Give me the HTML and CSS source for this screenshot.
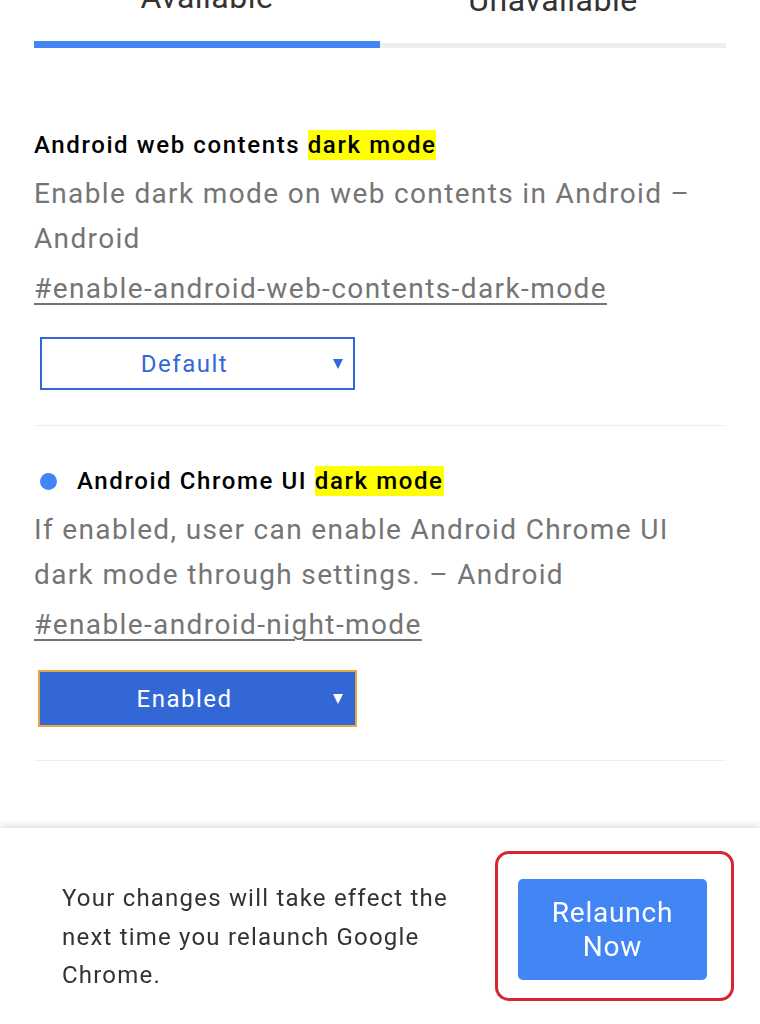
FILE: index.html
```html
<!DOCTYPE html>
<html lang="en">
<head>
<meta charset="utf-8">
<title>Flags</title>
<link rel="stylesheet" href="styles.css">
</head>
<body>
<div class="page">
  <div class="tabs">
    <div class="tab active">
      <div class="tab-label">Available</div>
      <div class="tab-bar"></div>
    </div>
    <div class="tab">
      <div class="tab-label unavail">Unavailable</div>
      <div class="tab-bar"></div>
    </div>
  </div>

  <div class="experiment first">
    <div class="title-row">
      <h2 class="title">Android web contents <mark>dark mode</mark></h2>
    </div>
    <p class="desc">Enable dark mode on web contents in Android – Android</p>
    <a class="permalink" href="#enable-android-web-contents-dark-mode">#enable-android-web-contents-dark-mode</a>
    <div class="select">
      <span class="select-text">Default</span>
      <span class="select-arrow"></span>
    </div>
  </div>

  <div class="experiment">
    <div class="title-row">
      <span class="dot"></span>
      <h2 class="title">Android Chrome UI <mark>dark mode</mark></h2>
    </div>
    <p class="desc">If enabled, user can enable Android Chrome UI dark mode through settings. – Android</p>
    <a class="permalink" href="#enable-android-night-mode">#enable-android-night-mode</a>
    <div class="select enabled">
      <span class="select-text">Enabled</span>
      <span class="select-arrow"></span>
    </div>
  </div>
</div>

<div class="relaunch-bar">
  <p class="relaunch-text">Your changes will take effect the next time you relaunch Google Chrome.</p>
  <div class="highlight-box">
    <button class="relaunch-btn">Relaunch<br>Now</button>
  </div>
</div>
</body>
</html>
```

FILE: styles.css
```css
html, body {
  margin: 0;
  padding: 0;
  background: #ffffff;
  font-family: Roboto, "Noto Sans", "Liberation Sans", sans-serif;
  overflow: hidden;
  height: 1024px;
}

.page {
  padding: 0 34px;
}

.tabs {
  display: flex;
}

.tab {
  flex: 1;
  display: flex;
  flex-direction: column;
}

.tab-label {
  margin-top: -20px;
  height: 34px;
  line-height: 34px;
  font-size: 32px;
  letter-spacing: 0.5px;
  color: #333333;
  text-align: center;
  padding-bottom: 27px;
}

.tab-label.unavail {
  margin-top: -17px;
  padding-bottom: 24px;
}

.tab-bar {
  height: 5px;
  margin-top: 2px;
  background: #eeeeee;
}

.tab.active .tab-bar {
  height: 7px;
  margin-top: 0;
  background: #4285f4;
}

.experiment {
  padding-top: 39px;
  padding-bottom: 35px;
  border-bottom: 1px solid #eeeeee;
}

.experiment.first {
  padding-top: 81px;
}

.title-row {
  display: flex;
  align-items: center;
}

.dot {
  width: 17px;
  height: 17px;
  border-radius: 50%;
  background: #4285f4;
  margin-left: 6px;
  margin-right: 20px;
  flex: none;
}

.title {
  margin: 0;
  font-size: 24px;
  font-weight: 500;
  line-height: 32px;
  letter-spacing: 1.6px;
  color: #000000;
}

.title mark {
  background: #ffff00;
  color: #000000;
  padding: 1px 0;
}

.desc {
  margin: 10px 0 0;
  font-size: 28px;
  line-height: 45px;
  letter-spacing: 1.35px;
  color: #757575;
}

.permalink {
  display: block;
  margin-top: 5px;
  font-size: 28px;
  line-height: 45px;
  letter-spacing: 1.4px;
  color: #757575;
  text-decoration: underline;
  text-underline-offset: 5px;
  text-decoration-thickness: 2px;
}

.select {
  margin-top: 26px;
  margin-left: 6px;
  width: 315px;
  height: 53px;
  box-sizing: border-box;
  border: 2px solid #3367d6;
  color: #3367d6;
  display: flex;
  align-items: center;
  background: #ffffff;
}

.select.enabled {
  margin-top: 25px;
  background: #3367d6;
  color: #ffffff;
  outline: 2px solid #e8a640;
}

.select-text {
  flex: 1;
  text-align: center;
  font-size: 24px;
  letter-spacing: 1.5px;
  padding-right: 6px;
}

.select-arrow {
  width: 0;
  height: 0;
  border-left: 5.5px solid transparent;
  border-right: 5.5px solid transparent;
  border-top: 10px solid currentColor;
  margin-right: 10px;
  margin-top: 1px;
}

.relaunch-bar {
  position: fixed;
  left: 0;
  right: 0;
  bottom: 0;
  height: 196px;
  background: #ffffff;
  box-shadow: 0 -3px 6px rgba(0, 0, 0, 0.12);
  display: flex;
  align-items: center;
  padding: 0 26px 0 62px;
  box-sizing: border-box;
}

.relaunch-text {
  margin: 22px 0 0;
  width: 410px;
  font-size: 24px;
  line-height: 38.5px;
  letter-spacing: 1.2px;
  color: #333333;
}

.highlight-box {
  margin-left: auto;
  width: 239px;
  height: 150px;
  box-sizing: border-box;
  border: 3px solid #d7262f;
  border-radius: 14px;
  padding: 25px 24px 18px 20px;
  display: flex;
}

.relaunch-btn {
  flex: 1;
  border: none;
  border-radius: 5px;
  background: #4285f4;
  color: #ffffff;
  font-family: Roboto, "Noto Sans", "Liberation Sans", sans-serif;
  font-size: 28px;
  line-height: 34px;
  letter-spacing: 0.8px;
  padding: 0;
}
```
